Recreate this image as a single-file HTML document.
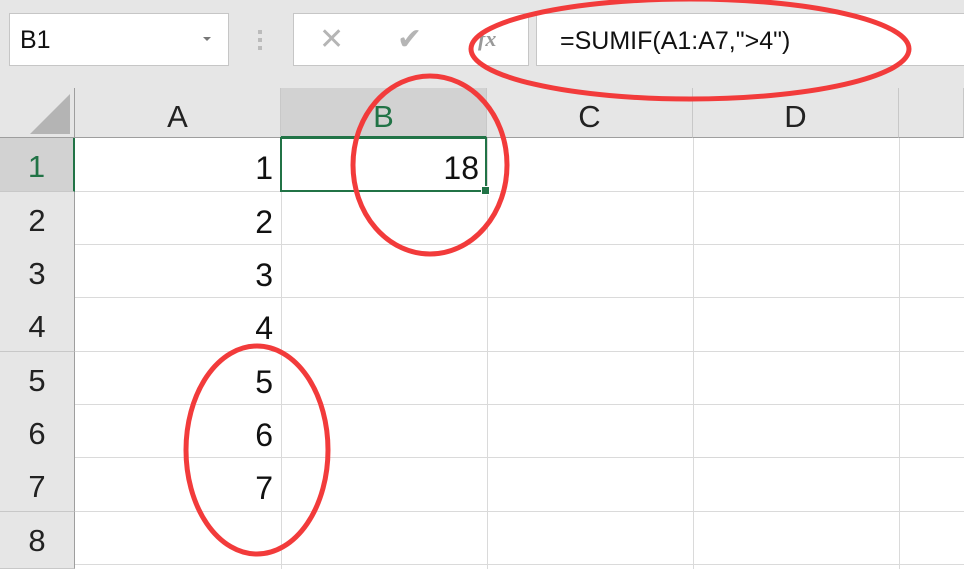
<!DOCTYPE html><html style="width:964px;height:569px;overflow:hidden"><head><style>
body{margin:0;width:964px;height:569px;overflow:hidden;background:#fff;font-family:"Liberation Sans","DejaVu Sans",sans-serif;position:relative}
.a{position:absolute}
.tb{left:0;top:0;width:964px;height:88px;background:#e6e6e6}
.box{background:#fff;border:1px solid #c6c6c6;box-sizing:border-box}
.ch{top:88px;height:50px;background:#e6e6e6;border-bottom:1px solid #9e9e9e;border-right:1px solid #c8c8c8;box-sizing:border-box;font-size:31px;color:#222;text-align:center;line-height:58px}
.rh{left:0;width:75px;height:54px;background:#e6e6e6;border-bottom:1px solid #c8c8c8;border-right:1px solid #9e9e9e;box-sizing:border-box;font-size:31px;color:#222;text-align:center;line-height:58px}
.hl{left:75px;width:889px;height:1px;background:#dadada}
.vl{top:138px;width:1px;height:431px;background:#dadada}
.n{font-size:32px;color:#111;text-align:right;width:200px;height:54px;line-height:60px}
</style></head><body>
<div class="a tb"></div>
<div class="a box" style="left:9px;top:13px;width:220px;height:53px;font-size:25px;line-height:53px;padding-left:10px;color:#111">B1</div>
<div class="a" style="left:203px;top:37px;border:4px solid transparent;border-top:4px solid #777"></div>
<div class="a" style="left:258px;top:30px;width:4px;height:4px;background:#bbb;box-shadow:0 8px #bbb,0 16px #bbb"></div>
<div class="a box" style="left:293px;top:13px;width:236px;height:53px"></div>
<div class="a" style="left:319px;top:22px;font-size:30px;color:#b5b5b5">✕</div>
<div class="a" style="left:397px;top:22px;font-size:30px;color:#b5b5b5">✔</div>
<div class="a" style="left:478px;top:26px;font-size:22px;color:#999;font-style:italic;font-family:'Liberation Serif',serif;font-weight:bold">fx</div>
<div class="a box" style="left:536px;top:13px;width:440px;height:53px;font-size:25px;line-height:55px;padding-left:23px;color:#111">=SUMIF(A1:A7,"&gt;4")</div>
<div class="a" style="left:0;top:88px;width:75px;height:50px;background:#e6e6e6;border-right:1px solid #9e9e9e;border-bottom:1px solid #9e9e9e;box-sizing:border-box"></div>
<svg class="a" style="left:28px;top:92px" width="44" height="44"><polygon points="42,2 42,42 2,42" fill="#b4b4b4"/></svg>
<div class="a ch" style="left:75px;width:206px">A</div>
<div class="a ch" style="left:281px;width:206px;background:#d2d2d2;color:#217346;border-bottom:2px solid #217346">B</div>
<div class="a ch" style="left:487px;width:206px">C</div>
<div class="a ch" style="left:693px;width:206px">D</div>
<div class="a ch" style="left:899px;width:65px"></div>
<div class="a rh" style="top:138px;background:#d2d2d2;color:#217346;border-right:2px solid #217346">1</div>
<div class="a rh" style="top:192px">2</div>
<div class="a rh" style="top:245px">3</div>
<div class="a rh" style="top:298px">4</div>
<div class="a rh" style="top:352px">5</div>
<div class="a rh" style="top:405px">6</div>
<div class="a rh" style="top:458px">7</div>
<div class="a rh" style="top:512px;height:57px">8</div>
<div class="a hl" style="top:191px"></div><div class="a hl" style="top:244px"></div><div class="a hl" style="top:297px"></div><div class="a hl" style="top:351px"></div><div class="a hl" style="top:404px"></div><div class="a hl" style="top:457px"></div><div class="a hl" style="top:511px"></div><div class="a hl" style="top:564px"></div>
<div class="a vl" style="left:281px"></div><div class="a vl" style="left:487px"></div><div class="a vl" style="left:693px"></div><div class="a vl" style="left:899px"></div>
<div class="a n" style="left:73px;top:138px">1</div>
<div class="a n" style="left:73px;top:192px">2</div>
<div class="a n" style="left:73px;top:245px">3</div>
<div class="a n" style="left:73px;top:298px">4</div>
<div class="a n" style="left:73px;top:352px">5</div>
<div class="a n" style="left:73px;top:405px">6</div>
<div class="a n" style="left:73px;top:458px">7</div>
<div class="a" style="left:280px;top:137px;width:207px;height:55px;border:2px solid #217346;box-sizing:border-box"></div>
<div class="a" style="left:481px;top:186px;width:7px;height:7px;background:#217346;border:1px solid #fff"></div>
<div class="a n" style="left:279px;top:138px">18</div>
<svg class="a" style="left:0;top:0" width="964" height="569"><g fill="none" stroke="#f23b3b" stroke-width="5">
<ellipse cx="690" cy="49" rx="219" ry="50"/>
<ellipse cx="430" cy="165" rx="77" ry="89"/>
<ellipse cx="257" cy="450" rx="71" ry="104"/></g></svg>
</body></html>
